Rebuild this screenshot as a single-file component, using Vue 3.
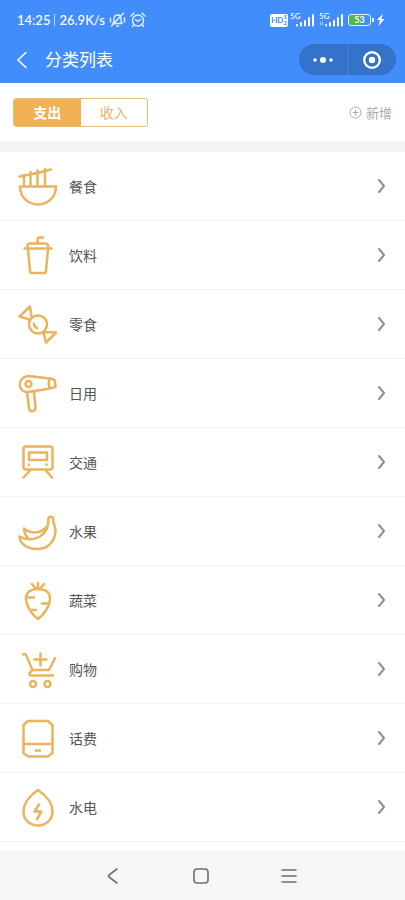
<script setup>
import { ref } from 'vue'

const tab = ref('out')

const categories = [
  { name: '餐食', d: 'M2 20.500H38C38 31 30 38.500 20 38.500S2 31 2 20.500ZM1.500 10.500Q17 8 33 3.500M6 9V20M12.500 6V20M19.500 4.500V20M27 3V20' },
  { name: '饮料', d: 'M6.500 13.500H33.500M9.500 13V11Q9.500 8.500 12 8.500H27.500Q30 8.500 30 11V13M10 14L12 36Q12 38 14 38H26Q28 38 28 36L30 14M19.500 8V5Q19.500 2.500 22 2.500H25' },
  { name: '零食', d: 'M29 20.500A9 9 0 1 1 11 20.500A9 9 0 1 1 29 20.500ZM13.500 13L12 2.500L1.500 12.500L11.500 15.500M26.500 28L38 28.500L28 38.500L25.500 28.500M16 19.500Q16 23 19 24' },
  { name: '日用', d: 'M10 3L32 5.500L35.500 6.500Q37 7 37 9L37.500 14Q31 16 10 19C-1 19-1 5 10 3ZM31.500 6Q30 10 31.500 15M13.500 11A3 3 0 1 1 7.500 11A3 3 0 1 1 13.500 11ZM9 19L11 35C11.500 39.500 18 39 17.500 34.500L16 19' },
  { name: '交通', d: 'M8 4.500H32Q34.500 4.500 34.500 7V25Q34.500 27.500 32 27.500H8Q5.500 27.500 5.500 25V7Q5.500 4.500 8 4.500ZM11 10.500H29V18H11ZM11 22.500V23M28.500 22.500V23M12 28.500L5.500 35.500M28 28.500L34 35.500' },
  { name: '水果', d: 'M30.500 6.500Q32.500 5 35 6.500C34.500 13 38 15 37.500 21C36 33 28 38 19 38C9 38 2 33 1.500 25.500C8 29 16 29 22 25.500C29 21 31 15 30.500 6.500ZM10 27Q6 23 6 17.500C13 23 21 23 29 16' },
  { name: '蔬菜', d: 'M20 39C15 36 8 26 8 18.500C8 12 13 9 20 9S32 12 32 18.500C32 26 25 36 20 39ZM20 9V3M18 9L14 4M22 9L26 4M9 17.500H16M24 23.500H31M13 30H18' },
  { name: '购物', d: 'M5 5.500Q7.500 4 8.500 7L14.500 21H31L37 9M14.500 21L11.500 24Q11 26 13 26.500H35M22.500 4.500V16.500M16.500 10.500H28.500M18 35A3 3 0 1 1 12 35A3 3 0 1 1 18 35ZM32.500 35A3 3 0 1 1 26.500 35A3 3 0 1 1 32.500 35Z' },
  { name: '话费', d: 'M10 3H30L34.500 7V35L30 38.500H10L5.500 35V7ZM6 26H34M18 32.500H22' },
  { name: '水电', d: 'M20 3C26 7 34.500 15 34.500 24.500C34.500 33 28 38.500 20 38.500S5.500 33 5.500 24.500C5.500 15 14 7 20 3ZM21 17.500L16.500 24.500H23.500L19 32' },
]
</script>

<template>
  <div class="page">
    <header class="top">
      <div class="status">
        <div class="status-side">
          <span>14:25</span>
          <i class="bar"></i>
          <span>26.9K/s</span>
          <svg class="bell" width="17" height="16" viewBox="0 0 17 16">
            <path d="M4 11.500Q5 10 5 7Q5 3 8.500 3T12 7Q12 10 13 11.500ZM7.500 14H9.500M2.500 14L14.500 1M1.500 6V10M15.500 6V10" />
          </svg>
          <svg class="clock" width="16" height="16" viewBox="0 0 16 16">
            <circle cx="8" cy="8.500" r="5.500" />
            <path d="M1 4L4 1M15 4L12 1M5.500 7.500L8 9.500L10.500 7.500M3.500 13L2.500 14.500M12.500 13L13.500 14.500" />
          </svg>
        </div>
        <div class="status-side">
          <span class="hd">HD<span class="hd-num"><b>1</b><b>2</b></span></span>
          <svg v-for="n in 2" :key="n" class="signal" width="25" height="16" viewBox="0 0 25 16">
            <text x="0" y="7">5G</text>
            <path d="M7 13.500V13M11 13.500V11M15 13.500V9M19 13.500V6M23 13.500V3" />
            <path v-if="n === 2" class="arrows" d="M1.500 13V10M3.500 10V13" />
          </svg>
          <span class="battery">53</span>
          <svg width="8" height="12" viewBox="0 0 8 12">
            <path d="M5.500 0L0 6H3L1.500 12L7.500 5H4.500Z" fill="#fff" />
          </svg>
        </div>
      </div>
      <div class="title-bar">
        <button class="back" aria-label="返回">
          <svg width="12" height="18" viewBox="0 0 12 18"><path d="M10 1.500L2 9L10 16.500" /></svg>
        </button>
        <h1>分类列表</h1>
        <div class="capsule">
          <button aria-label="更多">
            <svg width="20" height="8" viewBox="0 0 20 8" fill="#fff">
              <circle cx="2" cy="4" r="1.700" /><circle cx="10" cy="4" r="3" /><circle cx="18" cy="4" r="1.700" />
            </svg>
          </button>
          <button aria-label="关闭">
            <svg width="20" height="20" viewBox="0 0 20 20">
              <circle cx="10" cy="10" r="7.800" fill="none" stroke="#fff" stroke-width="2.400" />
              <circle cx="10" cy="10" r="3.200" fill="#fff" />
            </svg>
          </button>
        </div>
      </div>
    </header>

    <div class="toolbar">
      <div class="segment">
        <button :class="{ active: tab === 'out' }" @click="tab = 'out'">支出</button>
        <button :class="{ active: tab === 'in' }" @click="tab = 'in'">收入</button>
      </div>
      <button class="add">
        <svg width="13" height="13" viewBox="0 0 13 13">
          <circle cx="6.500" cy="6.500" r="5.500" /><path d="M6.500 4V9M4 6.500H9" />
        </svg>
        新增
      </button>
    </div>

    <main>
      <ul>
        <li v-for="c in categories" :key="c.name">
          <a href="#">
            <svg class="icon" width="40" height="40" viewBox="0 0 40 40"><path :d="c.d" /></svg>
            <span class="name">{{ c.name }}</span>
            <svg class="arrow" width="10" height="14" viewBox="0 0 10 14"><path d="M3 1L8 7L3 13" /></svg>
          </a>
        </li>
      </ul>
    </main>

    <nav>
      <button aria-label="后退">
        <svg width="16" height="18" viewBox="0 0 16 18"><path d="M12 2L4 8Q3 9 4 10L12 16" /></svg>
      </button>
      <button aria-label="主页">
        <svg width="16" height="16" viewBox="0 0 16 16"><rect x="1" y="1" width="14" height="14" rx="3" /></svg>
      </button>
      <button aria-label="任务">
        <svg width="16" height="16" viewBox="0 0 16 16"><path d="M1 2H15M1 8H15M1 14H15" /></svg>
      </button>
    </nav>
  </div>
</template>

<style>
body {
  margin: 0;
}
</style>

<style scoped>
.page {
  display: flex;
  flex-direction: column;
  min-height: 100vh;
  background: #fff;
  font-family: Roboto, "Noto Sans CJK SC", sans-serif;
}
button {
  display: flex;
  align-items: center;
  justify-content: center;
  padding: 0;
  border: 0;
  background: none;
  font: inherit;
  color: inherit;
  cursor: pointer;
}
svg {
  display: block;
  flex: none;
}
path,
rect {
  stroke-linecap: round;
  stroke-linejoin: round;
}
.top {
  background: #428dfc;
  color: #fff;
}
.status {
  display: flex;
  align-items: center;
  justify-content: space-between;
  height: 36px;
  padding: 4px 20px 0 17px;
  box-sizing: border-box;
  font-family: Lato, sans-serif;
  font-size: 13px;
  font-weight: 500;
}
.status-side {
  display: flex;
  align-items: center;
  gap: 4px;
}
.bar {
  width: 1px;
  height: 12px;
  background: #b9d5ff;
}
.bell,
.clock {
  fill: none;
  stroke: #e4efff;
  stroke-width: 1.400;
}
.hd {
  display: flex;
  align-items: center;
  justify-content: center;
  width: 18px;
  height: 13px;
  margin-right: -2px;
  border-radius: 2px;
  background: #fff;
  color: #428dfc;
  font-size: 8px;
  font-weight: 700;
}
.hd-num {
  display: flex;
  flex-direction: column;
  font-size: 6px;
  line-height: 6px;
}
.signal {
  fill: none;
  stroke: #fff;
  stroke-width: 2;
}
.signal text {
  fill: #fff;
  stroke: none;
  font-size: 8px;
}
.signal .arrows {
  stroke: #a9cbff;
  stroke-width: 1;
}
.battery {
  position: relative;
  width: 21px;
  height: 10px;
  margin-right: 2px;
  border: 1px solid #e4efff;
  border-radius: 3px;
  background: linear-gradient(90deg, #4fb848 55%, #428dfc 55%);
  font-size: 9px;
  font-weight: 700;
  line-height: 10px;
  text-align: center;
}
.battery::after {
  content: "";
  position: absolute;
  top: 3px;
  right: -4px;
  width: 2px;
  height: 4px;
  background: #e4efff;
}
.title-bar {
  display: flex;
  align-items: center;
  height: 47px;
  padding: 0 9px 0 16px;
}
.back svg {
  fill: none;
  stroke: #fff;
  stroke-width: 1.500;
}
h1 {
  flex: 1;
  margin: 0 0 0 17px;
  padding-top: 1px;
  font-size: 17px;
  font-weight: 400;
  line-height: 26px;
}
.capsule {
  display: flex;
  width: 97px;
  height: 31px;
  border-radius: 16px;
  background: #3572ca;
}
.capsule button {
  flex: 1;
}
.capsule button + button {
  border-left: 1px solid #437ed2;
}
.toolbar {
  display: flex;
  align-items: center;
  justify-content: space-between;
  height: 58px;
  padding: 0 13px;
}
.segment {
  display: flex;
  width: 135px;
  height: 29px;
  box-sizing: border-box;
  border: 1px solid #e6bd75;
  border-radius: 3px;
  overflow: hidden;
  color: #dfb36a;
  font-size: 14px;
}
.segment button {
  flex: 1;
}
.segment .active {
  background: #f0b255;
  color: #fff;
  font-weight: 700;
}
.add {
  gap: 4px;
  color: #aaa;
  font-size: 13px;
}
.add svg {
  fill: none;
  stroke: #aaa;
  stroke-width: 1;
}
main {
  flex: 1;
  border-top: 11px solid #f3f4f8;
}
ul {
  margin: 0;
  padding: 0;
  list-style: none;
}
li a {
  display: flex;
  align-items: center;
  height: 68px;
  padding: 0 19px 0 18px;
  border-bottom: 1px solid #f2f2f3;
  color: #555;
  text-decoration: none;
}
.icon {
  fill: none;
  stroke: #e9b45c;
  stroke-width: 2.500;
}
.name {
  flex: 1;
  margin-left: 11px;
  font-size: 14px;
}
.arrow {
  fill: none;
  stroke: #909090;
  stroke-width: 2;
}
nav {
  display: flex;
  justify-content: center;
  height: 49px;
  padding-right: 4px;
  background: #f6f6f6;
}
nav button {
  width: 88px;
}
nav svg {
  fill: none;
  stroke: #707070;
  stroke-width: 1.600;
}
</style>
